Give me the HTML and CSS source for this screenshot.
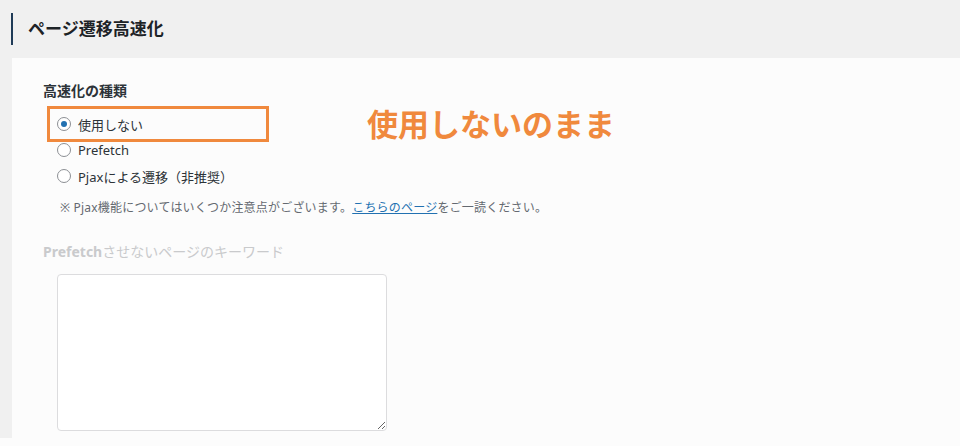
FILE: index.html
```html
<!DOCTYPE html>
<html lang="ja">
<head>
<meta charset="utf-8">
<title>ページ遷移高速化</title>
<link rel="stylesheet" href="styles.css">
</head>
<body>
<div class="page">
  <header class="header">
    <h1 class="title">ページ遷移高速化</h1>
  </header>
  <div class="body-wrap">
    <section class="main">
      <h2 class="field-label">高速化の種類</h2>
      <div class="options">
        <label class="option"><span class="radio checked"></span><span>使用しない</span></label>
        <label class="option"><span class="radio"></span><span>Prefetch</span></label>
        <label class="option"><span class="radio"></span><span>Pjaxによる遷移（非推奨）</span></label>
      </div>
      <p class="note">※ Pjax機能についてはいくつか注意点がございます。<a href="#" class="link">こちらのページ</a>をご一読ください。</p>
      <h2 class="field-label disabled"><span class="latin">Prefetch</span>させないページのキーワード</h2>
      <textarea class="keywords"></textarea>
      <div class="highlight-box"></div>
      <div class="annotation">使用しないのまま</div>
    </section>
  </div>
</div>
</body>
</html>
```

FILE: styles.css
```css
* { box-sizing: border-box; }
html, body { margin: 0; padding: 0; }
body {
  background: #fcfcfc;
  font-family: "Noto Sans", "Noto Sans CJK JP", sans-serif;
  color: #1d2327;
}
.page {
  width: 960px;
  height: 446px;
  overflow: hidden;
}
.header {
  height: 58px;
  background: #f0f0f0;
  display: flex;
  align-items: center;
  padding-left: 11px;
}
.title {
  margin: 0;
  font-size: 17px;
  font-weight: 700;
  line-height: 32px;
  height: 32px;
  border-left: 2px solid #1f3b57;
  padding-left: 15px;
  color: #1d2327;
}
.body-wrap {
  background: #f0f0f0;
  padding-left: 12px;
}
.main {
  position: relative;
  background: #fcfcfc;
  height: 380px;
  padding: 23px 0 0 31px;
}
.field-label {
  margin: 0;
  font-size: 14px;
  font-weight: 700;
  line-height: 20px;
  color: #2c3338;
}
.field-label.disabled {
  margin-top: 25px;
  font-weight: 400;
  color: #c9cacc;
}
.field-label .latin {
  font-weight: 700;
}
.options {
  margin: 10px 0 0 14px;
  display: flex;
  flex-direction: column;
}
.option {
  display: flex;
  align-items: center;
  gap: 7px;
  height: 26px;
  font-size: 13px;
  color: #2c3338;
}
.radio {
  width: 14px;
  height: 14px;
  border: 1px solid #8c8f94;
  border-radius: 50%;
  background: #fff;
  display: flex;
  align-items: center;
  justify-content: center;
}
.radio.checked::after {
  content: "";
  width: 6px;
  height: 6px;
  border-radius: 50%;
  background: #2271b1;
}
.note {
  margin: 10px 0 0 17px;
  font-size: 12px;
  line-height: 18px;
  letter-spacing: 0.2px;
  color: #646970;
}
.link {
  color: #2271b1;
  text-decoration: underline;
}
.keywords {
  display: block;
  margin: 12px 0 0 14px;
  width: 330px;
  height: 157px;
  border: 1px solid #dcdcde;
  border-radius: 4px;
  background: #fff;
}
.highlight-box {
  position: absolute;
  left: 35px;
  top: 48px;
  width: 222px;
  height: 36px;
  border: 3px solid #f0893d;
}
.annotation {
  position: absolute;
  left: 355px;
  top: 44px;
  font-size: 31px;
  font-weight: 700;
  line-height: 42px;
  color: #f0893d;
  font-family: "Noto Sans CJK JP", sans-serif;
}
```
